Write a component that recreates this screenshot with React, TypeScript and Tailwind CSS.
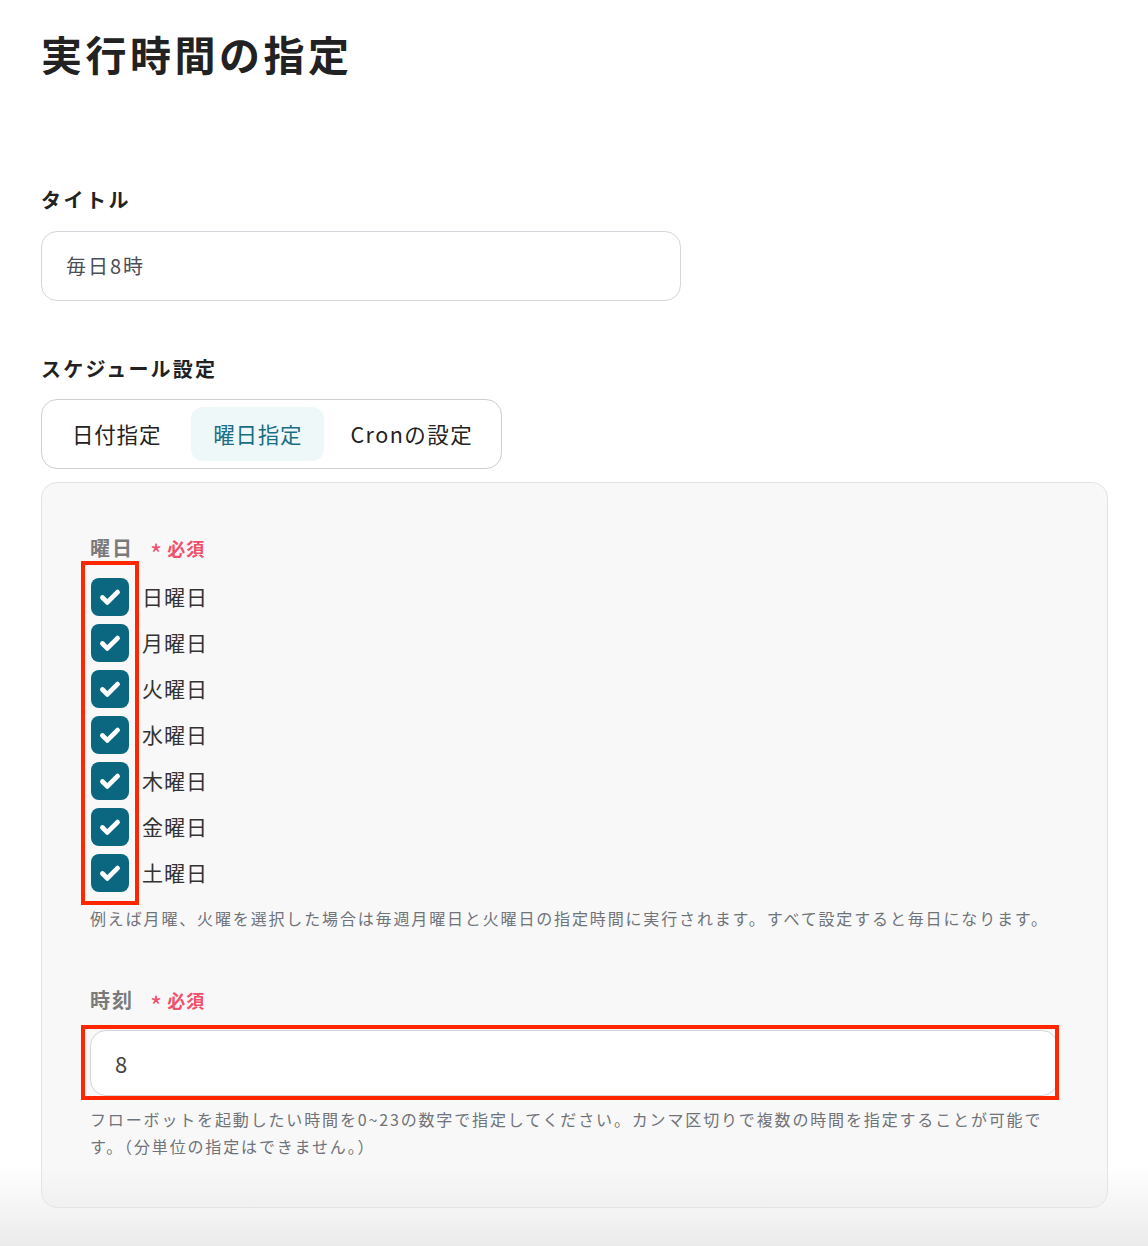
import React from 'react';

const DAYS = ['日曜日', '月曜日', '火曜日', '水曜日', '木曜日', '金曜日', '土曜日'];

function CheckIcon() {
  return (
    <svg viewBox="0 0 24 24" className="w-[26px] h-[26px]" fill="none">
      <path d="M5 12.5l4.5 4.5L19 7.5" stroke="white" strokeWidth="4.4" strokeLinecap="round" strokeLinejoin="round" />
    </svg>
  );
}

function RequiredTag() {
  return (
    <span className="ml-[16px] text-[18px] font-bold text-[#f0506b] tracking-[1px] flex items-center gap-[4px]">
      <span className="text-[26px] font-normal leading-none translate-y-[5px]">*</span>必須
    </span>
  );
}

export default function App() {
  return (
    <div className="relative min-h-[1246px] bg-white px-[41px] pt-[25px] font-['Noto_Sans_CJK_JP','Noto_Sans',sans-serif] text-[#222]">
      <h1 className="text-[41px] leading-[56px] font-bold text-[#222] tracking-[3.5px]">実行時間の指定</h1>

      <div className="mt-[105px] text-[20px] leading-[28px] font-bold text-[#222] tracking-[2.5px]">タイトル</div>
      <div className="mt-[17px] w-[640px] h-[70px] rounded-[16px] border border-[#d4d6dc] bg-white flex items-center px-[24px] text-[20px] tracking-[2px] text-[#4a4f57]">
        毎日8時
      </div>

      <div className="mt-[54px] text-[20px] leading-[28px] font-bold text-[#222] tracking-[2.2px]">スケジュール設定</div>
      <div className="mt-[16px] inline-flex h-[70px] items-center gap-[6px] rounded-[16px] border border-[#cfcfcf] bg-white px-[6px]">
        <div className="h-[54px] px-[24px] flex items-center text-[21.5px] tracking-[0.8px] text-[#222]">日付指定</div>
        <div className="h-[54px] px-[22px] flex items-center rounded-[12px] bg-[#eff8f8] text-[21.5px] tracking-[0.8px] text-[#1a6e84]">曜日指定</div>
        <div className="h-[54px] pl-[20px] pr-[22px] flex items-center text-[21.5px] tracking-[1.5px] text-[#222]">Cronの設定</div>
      </div>

      <div className="mt-[13px] w-[1067px] rounded-[16px] border border-[#e3e3e3] bg-[#f8f8f8] pl-[48px] pr-[49px] pt-[51px] pb-[47px]">
        <div className="flex items-center h-[28px]">
          <span className="text-[20px] font-bold text-[#7a7a7a] tracking-[2px]">曜日</span>
          <RequiredTag />
        </div>

        <div className="relative mt-[12px] w-fit">
          <div className="absolute left-[-9px] top-[-13px] w-[58px] h-[344px] border-[4px] border-[#ff2600]" />
          {DAYS.map(d => (
            <div key={d} className="h-[46px] flex items-center">
              <span className="w-[38px] h-[38px] ml-[1px] rounded-[8px] bg-[#0b6680] flex items-center justify-center">
                <CheckIcon />
              </span>
              <span className="ml-[13px] text-[21px] tracking-[1px] text-[#333]">{d}</span>
            </div>
          ))}
        </div>

        <p className="mt-[9px] text-[16px] leading-[27px] tracking-[1.85px] text-[#6f737a]">
          例えば月曜、火曜を選択した場合は毎週月曜日と火曜日の指定時間に実行されます。すべて設定すると毎日になります。
        </p>

        <div className="mt-[54px] flex items-center h-[28px]">
          <span className="text-[20px] font-bold text-[#7a7a7a] tracking-[2px]">時刻</span>
          <RequiredTag />
        </div>

        <div className="relative mt-[16px]">
          <div className="h-[66px] rounded-[16px] border border-[#d4d6dc] bg-white flex items-center px-[24px] text-[22px] text-[#444]">
            8
          </div>
          <div className="absolute left-[-9px] top-[-5px] right-[-1px] bottom-[-4px] border-[4px] border-[#ff2600]" />
        </div>

        <p className="mt-[10px] text-[16px] leading-[27px] tracking-[1.85px] text-[#6f737a]">
          フローボットを起動したい時間を0~23の数字で指定してください。カンマ区切りで複数の時間を指定することが可能です。（分単位の指定はできません。）
        </p>
      </div>

      <div className="pointer-events-none absolute left-0 right-0 bottom-0 h-[80px] bg-gradient-to-b from-white/0 to-[#e6e6e6]/80" />
    </div>
  );
}
